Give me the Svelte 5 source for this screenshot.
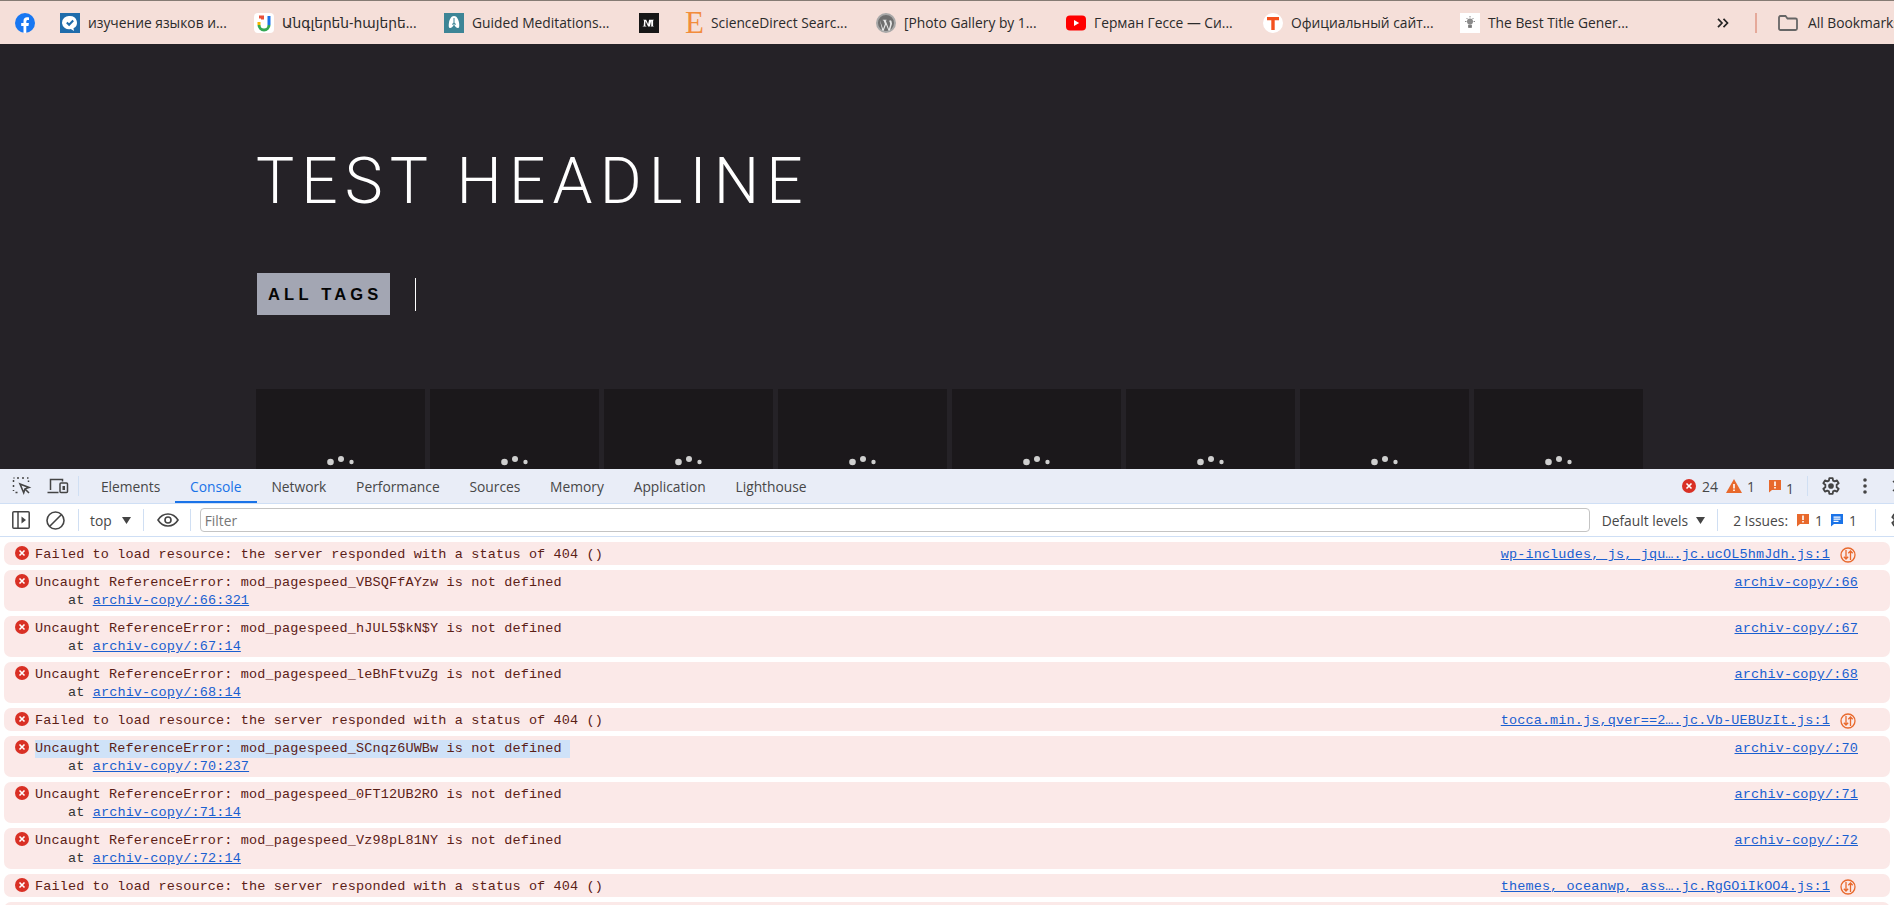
<script lang="ts">
	const tabs = ['Elements', 'Console', 'Network', 'Performance', 'Sources', 'Memory', 'Application', 'Lighthouse'];

	const logs = [
		{ msg: 'Failed to load resource: the server responded with a status of 404 ()', src: 'wp-includes,_js,_jqu….jc.ucOL5hmJdh.js:1', net: true },
		{ msg: 'Uncaught ReferenceError: mod_pagespeed_VBSQFfAYzw is not defined', at: 'archiv-copy/:66:321', src: 'archiv-copy/:66' },
		{ msg: 'Uncaught ReferenceError: mod_pagespeed_hJUL5$kN$Y is not defined', at: 'archiv-copy/:67:14', src: 'archiv-copy/:67' },
		{ msg: 'Uncaught ReferenceError: mod_pagespeed_leBhFtvuZg is not defined', at: 'archiv-copy/:68:14', src: 'archiv-copy/:68' },
		{ msg: 'Failed to load resource: the server responded with a status of 404 ()', src: 'tocca.min.js,qver==2….jc.Vb-UEBUzIt.js:1', net: true },
		{ msg: 'Uncaught ReferenceError: mod_pagespeed_SCnqz6UWBw is not defined', at: 'archiv-copy/:70:237', src: 'archiv-copy/:70', selected: true },
		{ msg: 'Uncaught ReferenceError: mod_pagespeed_0FT12UB2RO is not defined', at: 'archiv-copy/:71:14', src: 'archiv-copy/:71' },
		{ msg: 'Uncaught ReferenceError: mod_pagespeed_Vz98pL81NY is not defined', at: 'archiv-copy/:72:14', src: 'archiv-copy/:72' },
		{ msg: 'Failed to load resource: the server responded with a status of 404 ()', src: 'themes,_oceanwp,_ass….jc.RgGOiIkOO4.js:1', net: true },
		{ msg: '', src: '' }
	];

	const tiles = [0, 1, 2, 3, 4, 5, 6, 7];
</script>

{#snippet errorIcon(size = 14)}
	<svg class="err" width={size} height={size} viewBox="0 0 14 14">
		<circle cx="7" cy="7" r="7" fill="#d93025" />
		<path d="M4.5 4.5l5 5M9.5 4.5l-5 5" stroke="#fff" stroke-width="1.6" />
	</svg>
{/snippet}

{#snippet issueIcon(color = '#e8692c', mark = 'bang')}
	<svg class="issue" width="14" height="14" viewBox="0 0 14 14">
		<path d="M1 1h12v10H4l-3 2.5z" fill={color} />
		{#if mark === 'bang'}
			<path d="M6.2 2.5h1.6v4.6H6.2zM6.2 8h1.6v1.6H6.2z" fill="#fff" />
		{:else}
			<path d="M3.5 3.5h7v1.2h-7zM3.5 5.6h7v1.2h-7zM3.5 7.7h5v1.2h-5z" fill="#fff" />
		{/if}
	</svg>
{/snippet}

{#snippet gear()}
	<svg width="20" height="20" viewBox="0 0 24 24" fill="none" stroke="#444" stroke-width="2.2">
		<circle cx="12" cy="12" r="3.4" fill="#444" stroke="none" />
		<path d="M10 2.5h4l.5 3 2 1 2.7-1.2 2 3.4-2.4 1.9v2.8l2.4 1.9-2 3.4-2.7-1.2-2 1-.5 3h-4l-.5-3-2-1-2.7 1.2-2-3.400 2.400-1.900v-2.800L2.800 8.700l2-3.400 2.700 1.200 2-1z" stroke-linejoin="round" />
	</svg>
{/snippet}

<div class="page">
	<nav class="bookmarks">
		<a class="bm icon-only fb">
			<svg width="20" height="20" viewBox="0 0 20 20">
				<circle cx="10" cy="10" r="10" fill="#1877f2" />
				<path d="M8.500 20v-7H6.200v-3h2.300V8c0-2.400 1.400-3.700 3.500-3.700 1 0 2 .2 2 .2V7h-1.200c-1.100 0-1.500.7-1.500 1.400V10h2.600l-.4 3h-2.200v7z" fill="#fff" />
			</svg>
		</a>
		<a class="bm w168">
			<svg width="20" height="20" viewBox="0 0 20 20">
				<rect width="20" height="20" fill="#1f6cab" />
				<path d="M10 3a7 6.600 0 0 1 3.500 12.300L14 18l-3.200-2.100A7 6.600 0 1 1 10 3z" fill="#fff" />
				<path d="M6.800 9.500l2.300 2.300 4.100-4.300" fill="none" stroke="#1f6cab" stroke-width="2" />
			</svg>
			<span>изучение языков и...</span>
		</a>
		<a class="bm w164">
			<svg width="20" height="20" viewBox="0 0 20 20">
				<rect width="20" height="20" rx="4" fill="#fff" />
				<path d="M5 4h3.500v2.500" fill="none" stroke="#e8503a" stroke-width="3" />
				<path d="M5 9v3" stroke="#f5b400" stroke-width="3" />
				<path d="M5 12a5 5 0 0 0 10 0" fill="none" stroke="#34a853" stroke-width="3" />
				<path d="M15 3v9" stroke="#1a73e8" stroke-width="3" />
			</svg>
			<span>Անգլերեն-հայերե...</span>
		</a>
		<a class="bm w170">
			<svg width="20" height="20" viewBox="0 0 20 20">
				<rect width="20" height="20" fill="#3d8596" />
				<path d="M10 3c-3 0-4.500 3.500-5 6.500-.4 2.500-.5 5 .6 5.500 1.500.6 3.400-1.700 4.400-3.500 1 1.800 2.900 4.100 4.400 3.500 1.100-.5 1-3 .6-5.500C14.500 6.500 13 3 10 3z" fill="#fff" />
				<path d="M10 5v7M10 10l-2 1.500M10 10l2 1.500" stroke="#3d8596" stroke-width="1" fill="none" />
			</svg>
			<span>Guided Meditations...</span>
		</a>
		<a class="bm icon-only ml">
			<svg width="20" height="20" viewBox="0 0 20 20">
				<rect width="20" height="20" fill="#161616" />
				<path d="M3.500 13.200c1 0 1.200-.4 1.300-1.500l.3-4.200-.9-.4V6.800h3l1.900 4.500 1-4.500h4.700v.3l-.7.3v5.500l.7.3v.3h-3.300v-.3l.7-.3V8l-1.300 5.500H9.100L6.500 8l-.2 3.700c0 1 .3 1.400 1.200 1.500v.3h-4z" fill="#fff" />
			</svg>
		</a>
		<a class="bm w168 e">
			<b class="elsevier">E</b>
			<span>ScienceDirect Searc...</span>
		</a>
		<a class="bm w165">
			<svg width="20" height="20" viewBox="0 0 20 20">
				<circle cx="10" cy="10" r="9" fill="#6f6f6f" stroke="#a8a8a8" stroke-width="2" />
				<path d="M3.800 7l3.300 9 1.800-5-1.300-3.600-.9-.1v-.6h4v.6l-1 .1 3.200 8.500 1-3.400c.5-1.700.2-2.800-.4-3.700-.3-.5-.3-1.400.6-1.500l1.300.4.600 3-2 6.500-1.300.9-2.700-6.700-2.500 6.700-1.200-.6z" fill="#e8e8e8" />
			</svg>
			<span>[Photo Gallery by 1...</span>
		</a>
		<a class="bm w172">
			<svg width="20" height="20" viewBox="0 0 20 20">
				<rect y="2.500" width="20" height="15" rx="4" fill="#f00" />
				<path d="M8 7l5.200 3L8 13z" fill="#fff" />
			</svg>
			<span>Герман Гессе — Си...</span>
		</a>
		<a class="bm w172">
			<svg width="20" height="20" viewBox="0 0 20 20">
				<circle cx="10" cy="10" r="10" fill="#fff" />
				<path d="M4 4h12v3.200h-4.300V17H8.300V7.200H4z" fill="#f4511e" />
			</svg>
			<span>Официальный сайт...</span>
		</a>
		<a class="bm">
			<svg width="20" height="20" viewBox="0 0 20 20">
				<rect width="20" height="20" fill="#fff" />
				<circle cx="10" cy="8.500" r="3" fill="#8a8a8a" />
				<path d="M8.500 12h3v2.500h-3zM10 3v1.500M5 8.500h1.500M13.500 8.500H15M6.500 5l1 1M13.500 5l-1 1" stroke="#8a8a8a" fill="#777" />
			</svg>
			<span>The Best Title Gener...</span>
		</a>
		<div class="bm-end">
			<span class="chevrons">
				<svg width="12" height="10" viewBox="0 0 12 10" fill="none" stroke="#222" stroke-width="1.700">
					<path d="M1 .8L5 5 1 9.200M6.500 .8L10.500 5l-4 4.200" />
				</svg>
			</span>
			<i class="bm-sep"></i>
			<svg width="22" height="18" viewBox="0 0 22 18" fill="none" stroke="#666" stroke-width="1.800">
				<path d="M2 3.500a1.500 1.500 0 0 1 1.500-1.500h5l2 2.500h8a1.500 1.500 0 0 1 1.500 1.500v8.500a1.500 1.500 0 0 1-1.500 1.500h-15a1.500 1.500 0 0 1-1.500-1.500z" />
			</svg>
			<span class="all">All Bookmarks</span>
		</div>
	</nav>

	<section class="hero">
		<h1>TEST HEADLINE</h1>
		<div class="filters">
			<button class="tag">ALL TAGS</button>
			<i class="tag-sep"></i>
		</div>
		<div class="tiles">
			{#each tiles as t (t)}
				<div class="tile">
					<svg width="28" height="10" viewBox="0 0 28 10">
						<circle cx="3.500" cy="6" r="3.300" fill="#cfcfcf" />
						<circle cx="14" cy="3" r="3" fill="#cfcfcf" />
						<circle cx="24.500" cy="6" r="2.200" fill="#cfcfcf" />
					</svg>
				</div>
			{/each}
		</div>
	</section>

	<section class="devtools">
		<div class="tabbar">
			<div class="tool-icons">
				<svg width="20" height="20" viewBox="0 0 20 20" fill="none" stroke="#444" stroke-width="1.500">
					<path d="M1.500 15v-1M1.500 11V9M1.500 6V4M1.500 2h1M5 2h2M10 2h2M15 2h1.500M16.500 4.500v1.500M3.500 16.500h2" stroke-dasharray="2 1" />
					<path d="M8 8l9 3.500-4 1.300-1.300 4zM13 13l4 4" stroke-width="1.600" />
				</svg>
				<svg width="22" height="18" viewBox="0 0 22 18" fill="none" stroke="#444" stroke-width="1.500">
					<path d="M3.500 13V2.500h12v2M.5 15.500h11" />
					<rect x="13" y="6" width="7.500" height="9.500" rx="1" />
					<path d="M15.500 9h2.500v4h-2.500z" fill="#444" stroke="none" />
				</svg>
			</div>
			<i class="vsep tall"></i>
			<div class="tabs">
				{#each tabs as tab (tab)}
					<span class="tab" class:active={tab === 'Console'}>{tab}</span>
				{/each}
			</div>
			<div class="counts">
				{@render errorIcon(14)}
				<span class="n first">24</span>
				<svg width="16" height="14" viewBox="0 0 16 14">
					<path d="M8 0l8 14H0z" fill="#e8692c" />
					<path d="M7.200 5h1.600v4.500H7.200zM7.200 10.500h1.600V12H7.200z" fill="#fff" />
				</svg>
				<span class="n">1</span>
				{@render issueIcon()}
				<span class="n low">1</span>
				<i class="vsep tall"></i>
				<span class="gear">{@render gear()}</span>
				<svg class="dots" width="4" height="16" viewBox="0 0 4 16" fill="#444">
					<circle cx="2" cy="2" r="1.800" /><circle cx="2" cy="8" r="1.800" /><circle cx="2" cy="14" r="1.800" />
				</svg>
				<svg class="close" width="12" height="12" viewBox="0 0 12 12" stroke="#444" stroke-width="1.500">
					<path d="M1 1l10 10M11 1L1 11" />
				</svg>
			</div>
		</div>

		<div class="toolbar">
			<svg class="sidebar" width="18" height="18" viewBox="0 0 18 18" fill="none" stroke="#444" stroke-width="1.500">
				<rect x=".8" y=".8" width="16.400" height="16.400" rx="1" />
				<path d="M6 1v16" />
				<path d="M9.500 5.500L14 9l-4.500 3.500z" fill="#444" stroke="none" />
			</svg>
			<svg class="block" width="19" height="19" viewBox="0 0 19 19" fill="none" stroke="#444" stroke-width="1.600">
				<circle cx="9.500" cy="9.500" r="8.500" />
				<path d="M15.500 3.500l-12 12" />
			</svg>
			<i class="vsep"></i>
			<span class="ctx">top</span>
			<svg class="caret" width="9" height="7" viewBox="0 0 9 7"><path d="M0 0h9L4.500 7z" fill="#444" /></svg>
			<i class="vsep"></i>
			<svg class="eye" width="22" height="14" viewBox="0 0 22 14" fill="none" stroke="#444" stroke-width="1.600">
				<path d="M1 7c2.500-4 6-6 10-6s7.500 2 10 6c-2.500 4-6 6-10 6S3.500 11 1 7z" />
				<circle cx="11" cy="7" r="3" />
			</svg>
			<i class="vsep"></i>
			<input class="filter" placeholder="Filter" />
			<span class="levels">Default levels</span>
			<svg class="caret" width="9" height="7" viewBox="0 0 9 7"><path d="M0 0h9L4.500 7z" fill="#444" /></svg>
			<i class="vsep levels-sep"></i>
			<span class="issues">2 Issues:</span>
			{@render issueIcon()}
			<span class="n">1</span>
			{@render issueIcon('#1a73e8', 'lines')}
			<span class="n">1</span>
			<i class="vsep last"></i>
			<span class="gear">{@render gear()}</span>
		</div>

		<div class="logs">
			{#each logs as log}
				<div class="row">
					<div class="row-main">
						<span class="row-icon">{@render errorIcon(14)}</span>
						<div class="row-text">
							<div class="line"><span class:selected={log.selected}>{log.msg}</span></div>
							{#if log.at}
								<div class="line at">at <a>{log.at}</a></div>
							{/if}
						</div>
					</div>
					<a class="src" class:with-net={log.net}>{log.src}</a>
					{#if log.net}
						<svg class="net" width="16" height="16" viewBox="0 0 16 16" fill="none" stroke="#e8692c" stroke-width="1.300">
							<circle cx="8" cy="8" r="7" />
							<path d="M6 3v9M3.800 9.800L6 12l2.200-2.200M10.500 13V4M8.300 6.200L10.500 4l2.200 2.200" />
						</svg>
					{/if}
				</div>
			{/each}
		</div>
	</section>
</div>

<style>
	:global(body) {
		margin: 0;
		background: #fff;
	}

	.page {
		height: 905px;
		width: 1894px;
		overflow: hidden;
		display: flex;
		flex-direction: column;
		font-family: 'Open Sans', 'Noto Sans', 'DejaVu Sans', sans-serif;
	}

	/* bookmark bar */
	.bookmarks {
		flex: none;
		height: 43px;
		border-top: 1px solid #857b74;
		background: #f5dfd9;
		display: flex;
		align-items: center;
		padding-left: 15px;
		font-size: 13.800px;
		color: #2b2b2b;
		white-space: nowrap;
	}

	.bm {
		display: flex;
		align-items: center;
		gap: 8px;
		flex: none;
		width: 194px;
		color: inherit;
		text-decoration: none;
	}

	.bm svg {
		flex: none;
	}

	.bm.icon-only {
		width: 45px;
	}

	.bm.w168 {
		width: 194px;
	}

	.bm.w164 {
		width: 190px;
	}

	.bm.w170 {
		width: 195px;
	}

	.bm.icon-only.ml {
		width: 46px;
	}

	.bm.e {
		width: 191px;
	}

	.bm.w165 {
		width: 190px;
	}

	.bm.w172 {
		width: 197px;
	}

	.elsevier {
		width: 18px;
		font-family: 'Liberation Serif', serif;
		font-weight: 400;
		font-size: 31px;
		line-height: 24px;
		color: #f28c3c;
		text-align: center;
	}

	.bm-end {
		display: flex;
		align-items: center;
		margin-left: 63px;
	}

	.chevrons {
		display: flex;
		width: 38px;
	}

	.bm-sep {
		width: 2px;
		height: 20px;
		background: #e5a99a;
		margin-right: 20px;
	}

	.all {
		margin-left: 9px;
	}

	/* page content */
	.hero {
		flex: none;
		height: 425px;
		box-sizing: border-box;
		background: #252227;
		padding: 100px 0 0 256px;
		overflow: hidden;
	}

	h1 {
		margin: 0;
		font-family: Roboto, sans-serif;
		font-weight: 300;
		font-size: 64px;
		line-height: 75px;
		letter-spacing: 7.100px;
		color: #fff;
	}

	.filters {
		display: flex;
		align-items: center;
		margin-top: 54px;
		margin-left: 1px;
	}

	.tag {
		width: 133px;
		height: 42px;
		border: 0;
		padding: 0 0 0 11px;
		text-align: left;
		background: #a3a6b3;
		color: #050505;
		font-family: 'Liberation Sans', sans-serif;
		font-weight: 700;
		font-size: 16.500px;
		letter-spacing: 4.200px;
	}

	.tag-sep {
		width: 1px;
		height: 33px;
		margin-left: 25px;
		background: #fff;
	}

	.tiles {
		display: flex;
		gap: 5px;
		margin-top: 74px;
	}

	.tile {
		width: 169px;
		height: 90px;
		flex: none;
		background: #1b181b;
		display: flex;
		justify-content: center;
		padding-top: 67px;
		box-sizing: border-box;
	}

	/* devtools */
	.devtools {
		flex: 1;
		min-height: 0;
		overflow: hidden;
		background: #fff;
		font-size: 13px;
		color: #474747;
	}

	.vsep {
		flex: none;
		display: block;
		width: 1px;
		height: 22px;
		background: #d0dff3;
	}

	.vsep.tall {
		height: 20px;
	}

	.tabbar {
		height: 34px;
		border-bottom: 1px solid #cfdff5;
		background: #e9edf7;
		display: flex;
		align-items: center;
		white-space: nowrap;
	}

	.tool-icons {
		display: flex;
		align-items: center;
		gap: 15px;
		padding-left: 12px;
		width: 66px;
	}

	.tabs {
		display: flex;
		align-self: stretch;
		margin-left: 7px;
	}

	.tab {
		display: flex;
		align-items: center;
		padding: 0 14.900px;
		height: 34px;
		box-sizing: border-box;
		font-size: 13.800px;
	}

	.tab.active {
		color: #1a73e8;
		border-bottom: 2px solid #1a73e8;
		padding-top: 2px;
	}

	.counts {
		margin-left: auto;
		display: flex;
		align-items: center;
		font-size: 14px;
		width: 212px;
		flex: none;
		overflow: hidden;
	}

	.counts svg {
		flex: none;
	}

	.counts .n {
		margin-left: 5px;
		margin-right: 13px;
	}

	.counts .first {
		margin-left: 6px;
		margin-right: 8px;
	}

	.counts .low {
		margin-left: 4px;
		margin-top: 4px;
		margin-right: 13px;
	}

	.counts .gear {
		margin-left: 13px;
		display: flex;
	}

	.counts .dots {
		margin-left: 22px;
	}

	.counts .close {
		margin-left: 25px;
	}

	.toolbar {
		height: 32px;
		border-bottom: 1px solid #cfdff5;
		display: flex;
		align-items: center;
		white-space: nowrap;
		font-size: 13.800px;
		overflow: hidden;
	}

	.toolbar svg {
		flex: none;
	}

	.sidebar {
		margin-left: 12px;
	}

	.block {
		margin-left: 16px;
		margin-right: 13px;
	}

	.ctx {
		margin-left: 11px;
		margin-right: 10px;
	}

	.caret {
		margin-right: 12px;
		flex: none;
	}

	.eye {
		margin-left: 13px;
		margin-right: 11px;
	}

	.filter {
		flex: none;
		width: 1390px;
		height: 24px;
		margin-left: 9px;
		margin-right: 11px;
		box-sizing: border-box;
		border: 1px solid #c4c4c4;
		border-radius: 4px;
		padding: 0 4px;
		font: inherit;
		outline: 0;
	}

	.filter::placeholder {
		color: #777;
	}

	.levels {
		margin-left: 1px;
		margin-right: 8px;
	}

	.levels-sep {
		margin-right: 15px;
	}

	.issues {
		margin-right: 8px;
	}

	.toolbar .n {
		margin: 0 7px 0 5px;
	}

	.vsep.last {
		margin-left: 11px;
		margin-right: 14px;
	}

	.toolbar .gear {
		display: flex;
		flex: none;
	}

	.logs {
		padding: 5px 4px 0;
		font-family: 'Liberation Mono', 'DejaVu Sans Mono', monospace;
		font-size: 13.500px;
		letter-spacing: .13px;
		line-height: 18px;
		color: #5b2016;
		display: flex;
		flex-direction: column;
		gap: 5px;
	}

	.row {
		display: flex;
		background: #fbe9e8;
		border-radius: 7px;
		padding: 4px 9px 1px 11px;
		min-height: 18px;
	}

	.row-main {
		flex: 1;
		display: flex;
		gap: 6px;
		min-width: 0;
	}

	.row-icon {
		display: flex;
		flex: none;
	}

	.row-icon svg {
		height: 14px;
	}

	.line {
		white-space: pre;
	}

	.line.at {
		padding-left: 33px;
		color: #333;
	}

	.selected {
		background: #cfe2f8;
		padding-right: 8px;
		display: inline-block;
	}

	a {
		color: #1a5fd0;
		text-decoration: underline;
	}

	.src {
		margin-right: 23px;
		white-space: pre;
	}

	.src.with-net {
		margin-right: 0;
	}

	.net {
		margin-left: 10px;
		margin-right: 25px;
		margin-top: 1px;
		flex: none;
	}
</style>
